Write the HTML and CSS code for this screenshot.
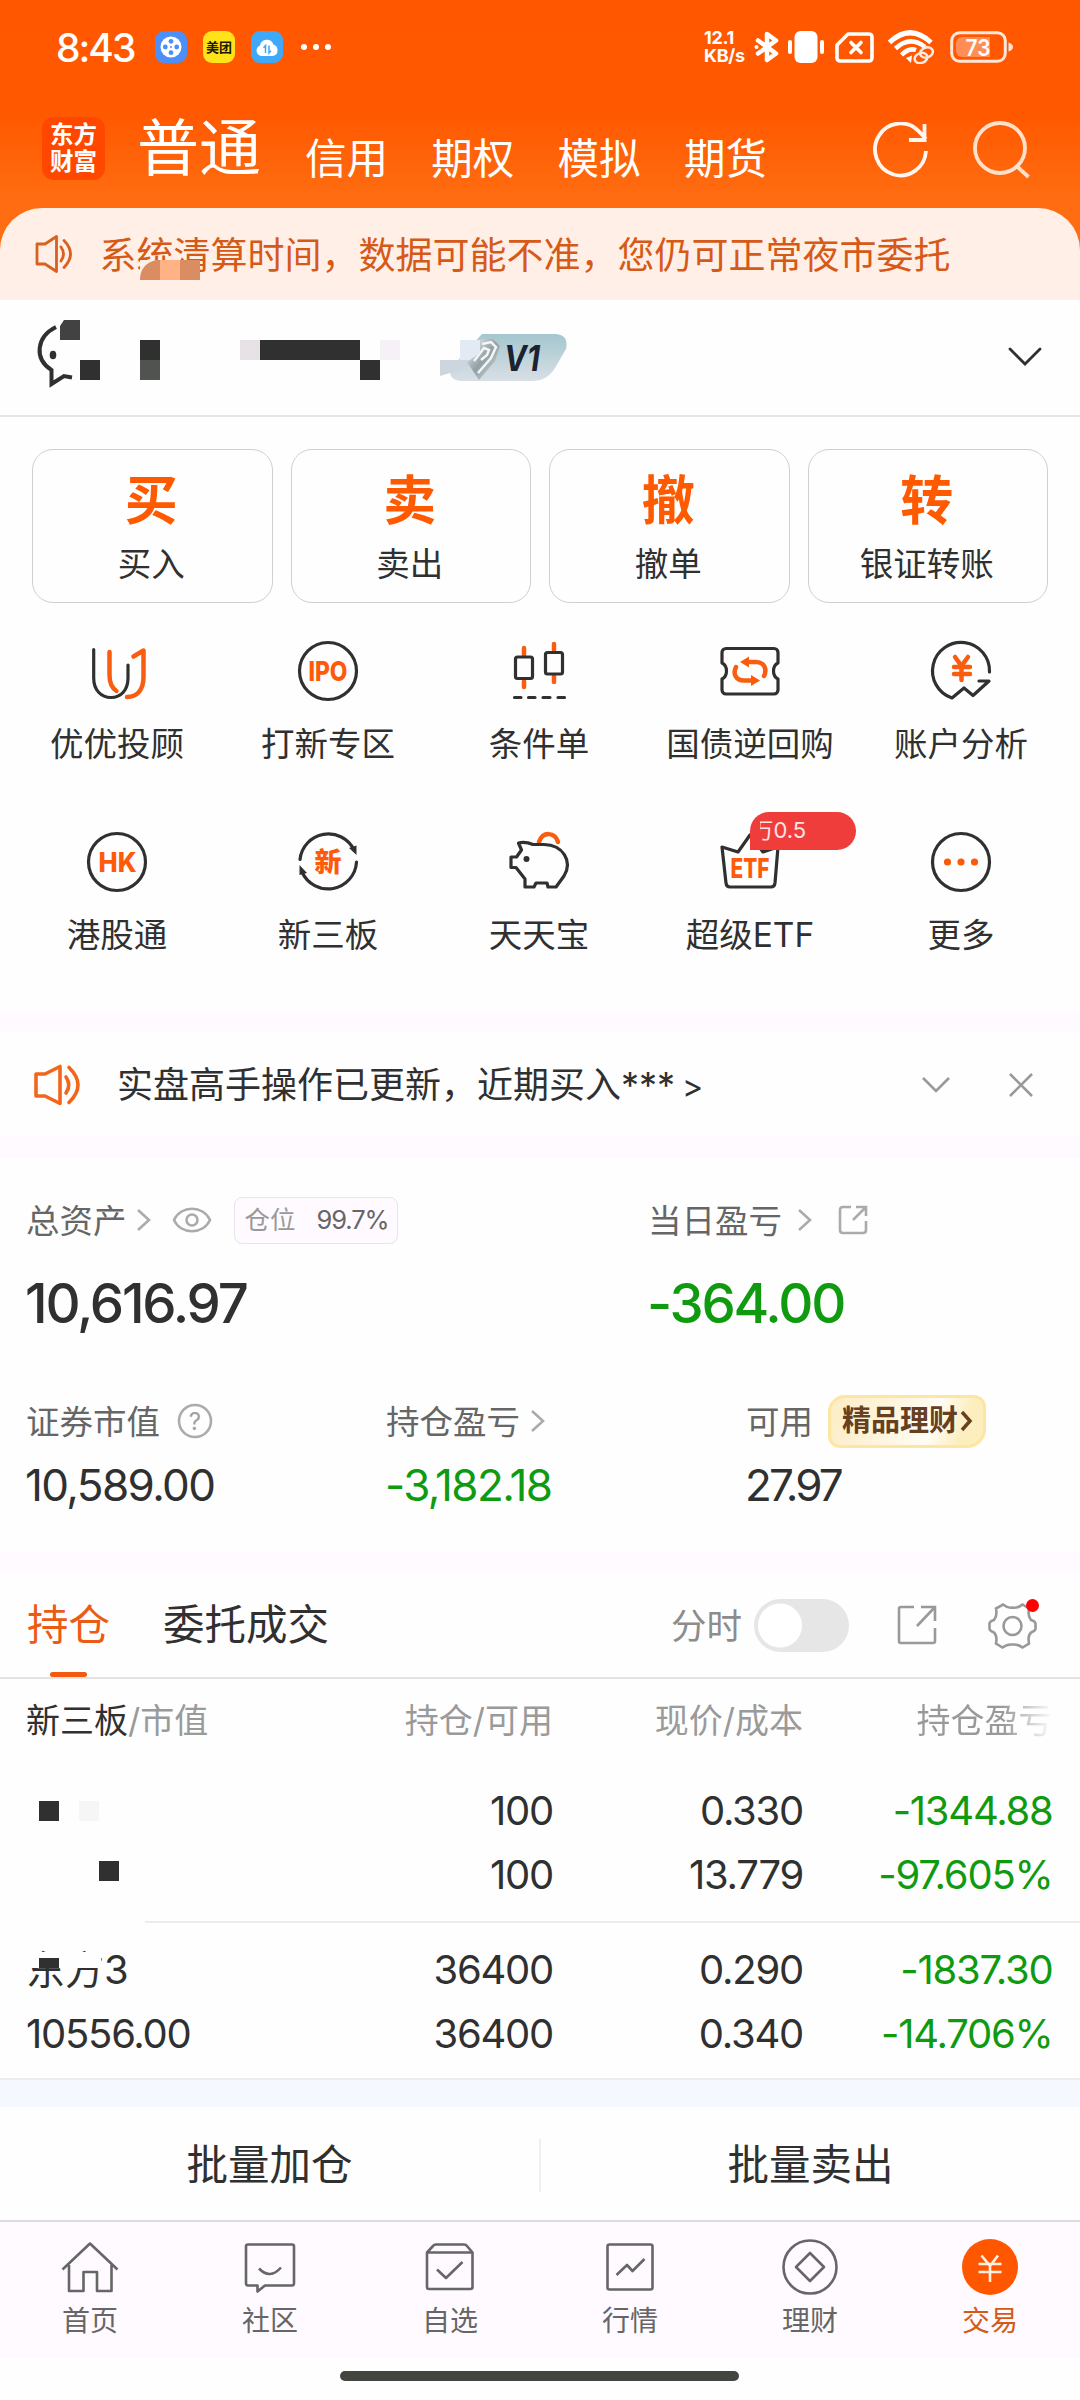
FILE: index.html
```html
<!DOCTYPE html>
<html lang="zh-CN">
<head>
<meta charset="utf-8">
<title>东方财富 - 交易</title>
<link rel="stylesheet" href="styles.css">
</head>
<body>
<div class="page">
  <header class="header">
    <div class="status">
      <span class="clock">8:43</span>
      <svg class="app" viewBox="0 0 32 32"><rect width="32" height="32" rx="9" fill="#4d8ff8"/><circle cx="16" cy="16" r="10.500" fill="#fff"/><g fill="#4d8ff8"><circle cx="16" cy="10.300" r="2.400"/><circle cx="16" cy="21.700" r="2.400"/><circle cx="10.300" cy="16" r="2.400"/><circle cx="21.700" cy="16" r="2.400"/><circle cx="16" cy="16" r="1"/></g></svg>
      <span class="app meituan">美团</span>
      <svg class="app" viewBox="0 0 32 32"><rect width="32" height="32" rx="9" fill="#3fa9f8"/><path d="M10 25a5.500 5.500 0 0 1-1-10.500 7 7 0 0 1 13.500-1A6 6 0 0 1 22 25Z" fill="#fff"/><path d="M14.500 22v-7.500l-2 2.200M18 14.500V22l2-2.200" fill="none" stroke="#3fa9f8" stroke-width="1.500"/></svg>
      <svg class="dots" viewBox="0 0 32 8"><g fill="#fff"><circle cx="4" cy="4" r="3"/><circle cx="16" cy="4" r="3"/><circle cx="28" cy="4" r="3"/></g></svg>
      <span class="speed"><span>12.1</span><span>KB/s</span></span>
      <svg class="bt" width="26" height="32" viewBox="0 0 26 32"><path d="M4 9.500L22 22.500L13 29V3L22 9.500L4 22.500" fill="none" stroke="#fff" stroke-width="4.500" stroke-linejoin="round" stroke-linecap="round"/><circle cx="2.500" cy="16" r="2" fill="#fff"/></svg>
      <svg class="vib" width="36" height="32" viewBox="0 0 36 32"><g fill="#fff"><rect x="6.500" y="0" width="23" height="32" rx="6"/><rect x="0" y="9" width="4" height="14" rx="2"/><rect x="32" y="9" width="4" height="14" rx="2"/></g></svg>
      <svg class="sim" width="39" height="32" viewBox="0 0 39 32"><path d="M13 3H34a3 3 0 0 1 3 3V27a3 3 0 0 1-3 3H5a3 3 0 0 1-3-3V14Z" fill="none" stroke="#fff" stroke-width="3.600" stroke-linejoin="round"/><path d="M16 11.500L26 21.500M26 11.500L16 21.500" stroke="#fff" stroke-width="3.600" stroke-linecap="round"/></svg>
      <svg class="wifi" width="46" height="34" viewBox="0 0 46 34"><g fill="none" stroke="#fff"><path d="M1.500 12.500Q22 -7 43 12.500" stroke-width="5"/><path d="M7.500 18.500Q22 5 37 17" stroke-width="4.500"/><path d="M13.500 25Q21 17.500 28 20" stroke-width="4.500"/></g><path d="M18 28L24 25.500L23 33Z" fill="#fff"/><g fill="none" stroke="#ffe9dc" stroke-width="2.400"><ellipse cx="33" cy="28" rx="6.500" ry="5" transform="rotate(-20 33 28)"/><ellipse cx="38.500" cy="22.500" rx="6.500" ry="5" transform="rotate(-20 38.500 22.500)"/></g></svg>
      <svg class="batt" width="64" height="32" viewBox="0 0 64 32"><rect x="1.700" y="1.700" width="53.600" height="28.600" rx="8" fill="none" stroke="#ffe6d8" stroke-width="3"/><path d="M12 6H40V26H12a6 6 0 0 1-6-6V12a6 6 0 0 1 6-6Z" fill="#ff8d55"/><path d="M58.500 11.500Q63 13 63 16T58.500 20.500Z" fill="#ffe6d8"/><text x="28" y="24.500" font-size="23" font-weight="600" fill="#fff" text-anchor="middle" textLength="25" lengthAdjust="spacingAndGlyphs">73</text></svg>
    </div>
    <nav class="topnav">
      <span class="logo">东方<br>财富</span>
      <span class="top-active">普通</span>
      <span class="top-item">信用</span><span class="top-item">期权</span><span class="top-item">模拟</span><span class="top-item">期货</span>
      <svg class="refresh" width="56" height="56" viewBox="0 0 56 56"><path d="M53 29A25.500 26 0 1 1 46 9.500L53 17M51.500 2V18H36" fill="none" stroke="#fff8f2" stroke-width="3.800"/></svg>
      <svg width="58" height="58" viewBox="0 0 58 58"><g fill="none" stroke="#ffe0cb" stroke-width="3.800"><circle cx="27" cy="27" r="25"/><path d="M43.500 45L55.500 56"/></g></svg>
    </nav>
  </header>

  <div class="notice">
    <svg class="notice-icon" width="38" height="40" viewBox="0 0 38 40"><g fill="none" stroke="#d9601f" stroke-width="2.800" stroke-linejoin="round" stroke-linecap="round"><path d="M2 10H10L21.500 2.500V37.500L10 30H2Z"/><path d="M26 13Q31 20 26 27M29 6.500Q42 20 29 33.500"/></g></svg>
    <span>系统清算时间，数据可能不准，您仍可正常夜市委托</span>
    <svg class="notice-mask" width="60" height="20" viewBox="0 0 60 20"><path d="M0 20Q0 4 16 0H20V20Z" fill="#da8c63"/><path d="M20 0H40V20H20Z" fill="#ffb285"/><path d="M40 0H60V20H40Z" fill="#da8c63"/></svg>
  </div>

  <section class="account">
    <svg class="avatar" width="62" height="66" viewBox="0 0 62 66"><path d="M18 14C-2 24-4 46 13.500 57V71L26 63L34 64.500" transform="translate(0 -7)" fill="none" stroke="#303030" stroke-width="4"/><ellipse cx="15" cy="35" rx="3.300" ry="4.300" fill="#303030"/><path d="M26 0H42V20H22V6Z" fill="#424242"/><path d="M42 40H62V60H42Z" fill="#303030"/></svg>
    <svg class="redacted" width="260" height="40" viewBox="0 0 260 40"><path d="M0 0H20V20H0Z" fill="#303030"/><path d="M0 20H20V40H0Z" fill="#50534f"/><path d="M100 0H120V20H100Z" fill="#e6e2e6"/><path d="M120 0H220V20H120ZM220 20H240V40H220Z" fill="#303030"/><path d="M240 0H260V20H240Z" fill="#f5f1f6"/></svg>
    <svg class="level" width="128" height="50" viewBox="0 0 128 50">
      <defs><linearGradient id="lv" x1="0" y1="0" x2="0" y2="1"><stop offset="0" stop-color="#a4c6ce"/><stop offset="1" stop-color="#d9dfe6"/></linearGradient><linearGradient id="gem" x1="0" y1="0" x2="1" y2="1"><stop offset="0" stop-color="#f7f9f9"/><stop offset=".5" stop-color="#929fa3"/><stop offset="1" stop-color="#dde6e8"/></linearGradient></defs>
      <path d="M42 1H116Q129 2 126 16L115 35Q107 48 92 48H20Q9 47 10 36Z" fill="url(#lv)"/>
      <path d="M41 6H53L60 13L55 28L39 47L27 29Z" fill="url(#gem)"/><path d="M42 11L51 9L56 14L51 25L38 40M34 28L44 15L49 17L47 22L41 27" fill="none" stroke="#f2f6f7" stroke-width="2.500"/>
      <path d="M20 7H40V20L30 27H20Z" fill="#e2ebf3"/><path d="M0 27H30L20 37L0 43Z" fill="#cdd5df"/>
      <text x="64" y="37.500" font-size="36" font-weight="700" font-style="italic" fill="#1b2230" textLength="36" lengthAdjust="spacingAndGlyphs">V1</text></svg>
    <svg class="account-more" width="34" height="20" viewBox="0 0 34 20"><path d="M2 2L17 17L32 2" fill="none" stroke="#303030" stroke-width="2.800" stroke-linecap="round"/></svg>
  </section>

  <section class="cards">
    <div class="card"><b>买</b><span>买入</span></div>
    <div class="card"><b>卖</b><span>卖出</span></div>
    <div class="card"><b>撤</b><span>撤单</span></div>
    <div class="card"><b>转</b><span>银证转账</span></div>
  </section>

  <section class="tools">
    <div class="tool"><svg viewBox="0 0 64 64"><path class="k" d="M8.700 10.500V39C8.700 51 16 58.500 26 58.500S43 51 43 39V26"/><path class="o" d="M24.500 13V36C24.500 45 27 49 31.500 52M48.500 17.500L58.500 11.500V38C58.500 51 52 58 42 58"/></svg><span>优优投顾</span></div>
    <div class="tool"><svg viewBox="0 0 64 64"><circle class="k" cx="32" cy="32" r="28.500"/><text x="12.500" y="42" font-size="27" textLength="39" lengthAdjust="spacingAndGlyphs">IPO</text></svg><span>打新专区</span></div>
    <div class="tool"><svg viewBox="0 0 64 64"><path class="o" d="M17 9V16M17 42V48M47 5V11M47 37V43"/><rect class="k" x="8.500" y="18" width="17" height="21.500" rx="2"/><rect class="k" x="38.500" y="13.500" width="17" height="21.500" rx="2"/><path class="k" d="M7.500 58.500H14M21.500 58.500H28M36 58.500H43M51 58.500H57.500"/></svg><span>条件单</span></div>
    <div class="tool"><svg viewBox="0 0 64 64"><path class="k" d="M8 9.500H56a4 4 0 0 1 4 4V24C54 27 54 37 60 40V51a4 4 0 0 1-4 4H8a4 4 0 0 1-4-4V40C10 37 10 27 4 24V13.500a4 4 0 0 1 4-4Z"/><path class="o" d="M30 23H38C46 23 49.500 30 46 37M18 28C14.500 35 18 41.500 26 41.500H33"/><path class="of" d="M22 23L31 17.500V28.500ZM42 41.500L33 36V47Z"/></svg><span>国债逆回购</span></div>
    <div class="tool"><svg viewBox="0 0 64 64"><path class="k" d="M60.500 33A28.500 28.500 0 1 0 23 59L35 49L44 56.500L60 42H50"/><path class="o" d="M26 18L32.500 27L39 18M32.500 27V41M25 28H41M25 35H41"/></svg><span>账户分析</span></div>
    <div class="tool"><svg viewBox="0 0 64 64"><circle class="k" cx="32" cy="32" r="28.500"/><text x="13.500" y="42" font-size="27" textLength="38" lengthAdjust="spacingAndGlyphs">HK</text></svg><span>港股通</span></div>
    <div class="tool"><svg viewBox="0 0 64 64"><path class="k" d="M4 29.500A28.500 28.500 0 0 1 58 20M60.500 32A28.500 28.500 0 0 1 6 42"/><path d="M53 18L60.500 15.500V25ZM3.500 45V35L11 43Z" fill="#303030"/><text x="32" y="42" font-size="27" text-anchor="middle">新</text></svg><span>新三板</span></div>
    <div class="tool"><svg viewBox="0 0 64 64"><path class="o" d="M32 12C36 1 48 2 51 12"/><path class="k" d="M26 14.500C20 12 15 12 11.500 13L14.500 20L9.500 27H4V37.500H9L18 49V57H27L29 53H40L41 57H49L57 46C66 31 56 15 37 14.500Z"/><circle cx="19.500" cy="29" r="3" fill="#303030"/></svg><span>天天宝</span></div>
    <div class="tool"><svg viewBox="0 0 64 64"><path class="k" d="M4 17L20 22L32 5L45 22L60 17L57 53Q56.500 57 53 57H12Q8.500 57 8 53Z"/><text x="12.500" y="47.500" font-size="27" textLength="39" lengthAdjust="spacingAndGlyphs">ETF</text></svg><i class="fee"><em>万</em>0.5</i><span>超级ETF</span></div>
    <div class="tool"><svg viewBox="0 0 64 64"><circle class="k" cx="32" cy="32" r="28.500"/><g class="of"><circle cx="18.500" cy="32" r="3.600"/><circle cx="32" cy="32" r="3.600"/><circle cx="45.500" cy="32" r="3.600"/></g></svg><span>更多</span></div>
  </section>

  <section class="news">
    <svg width="48" height="42" viewBox="0 0 48 42"><g fill="none" stroke="#f2661c" stroke-width="3.600" stroke-linejoin="round" stroke-linecap="round"><path d="M3 10H12L27 2.500V39.500L12 32H3Z"/><path d="M33 13Q38.500 21 33 29M36 3.500Q54 21 36 38.500"/></g></svg>
    <span class="news-text">实盘高手操作已更新，近期买入***<span class="gt">&gt;</span></span>
    <svg width="30" height="18" viewBox="0 0 30 18"><path d="M2 2L15 15L28 2" class="g"/></svg>
    <svg class="close" width="26" height="26" viewBox="0 0 26 26"><path d="M2 2L24 24M24 2L2 24" class="g"/></svg>
  </section>

  <section class="assets">
    <div class="big-row">
      <div class="cell">
        <div class="label"><span>总资产</span><svg class="chev" width="16" height="24" viewBox="0 0 16 24"><path d="M2 2L13 12L2 22" class="gl"/></svg>
          <svg class="eye" width="40" height="28" viewBox="0 0 40 28"><path d="M2 14C9 -1 31 -1 38 14C31 29 9 29 2 14Z" class="gl"/><circle cx="20" cy="14" r="5.500" class="gl"/></svg>
          <span class="ratio">仓位<b>99.7%</b></span></div>
        <div class="big">10,616.97</div>
      </div>
      <div class="cell">
        <div class="label"><span>当日盈亏</span><svg class="chev wide" width="16" height="24" viewBox="0 0 16 24"><path d="M2 2L13 12L2 22" class="gl"/></svg>
          <svg class="share" width="30" height="30" viewBox="0 0 30 30"><path d="M13 2H5Q2 2 2 5V25Q2 28 5 28H25Q28 28 28 25V16M18 2H28V11M28 2L15 15" class="gl"/></svg></div>
        <div class="big green">-364.00</div>
      </div>
    </div>
    <div class="small-row">
      <div class="cell"><div class="label"><span>证券市值</span><svg class="help" width="36" height="36" viewBox="0 0 36 36"><circle cx="18" cy="18" r="16" class="gl"/><text x="18" y="26.500" font-size="24" fill="#a0a0a0" text-anchor="middle">?</text></svg></div><div class="val">10,589.00</div></div>
      <div class="cell"><div class="label"><span>持仓盈亏</span><svg class="chev near" width="16" height="24" viewBox="0 0 16 24"><path d="M2 2L13 12L2 22" class="gl"/></svg></div><div class="val green">-3,182.18</div></div>
      <div class="cell"><div class="label"><span>可用</span><span class="wealth">精品理财<svg width="13" height="24" viewBox="0 0 13 24"><path d="M2 3L10 12L2 21" fill="none" stroke="#66401f" stroke-width="3.500"/></svg></span></div><div class="val short">27.97</div></div>
    </div>
  </section>

  <section class="tabs">
    <span class="tab active">持仓</span><span class="tab second-tab">委托成交</span>
    <span class="minute">分时</span><span class="switch"></span>
    <svg class="export" width="40" height="40" viewBox="0 0 40 40"><path d="M17 2H4Q2 2 2 4V36Q2 38 4 38H36Q38 38 38 36V23M24 2H38V16M38 2L20 21" class="g"/></svg>
    <svg class="gear" width="52" height="54" viewBox="0 0 52 54"><path d="M16 6.500Q21 10.500 25.500 9.500Q31 10.500 35.500 6.500L42 10.500Q40.500 18 44 22Q48 23 48.500 25.500V31Q48 33 44 34.500Q40.500 38 42 45.500L35.500 49.500Q31 46 25.500 46.500Q20 46 15.500 49.500L9 45.500Q10.500 38 7 34.500Q3 33 2.500 31V25.500Q3 23 7 22Q10.500 18 9 10.500Z" class="g"/><circle cx="25.500" cy="28" r="9" class="g"/><circle cx="45.500" cy="7.500" r="6.500" fill="#f00"/></svg>
  </section>

  <section class="table">
    <div class="tr th"><span class="name"><b>新三板</b>/市值</span><span>持仓/可用</span><span>现价/成本</span><span class="fade">持仓盈亏</span></div>
    <div class="holding">
      <div class="name"><svg width="100" height="128" viewBox="0 0 100 128"><path d="M13 22H33V42H13ZM73 82H93V102H73Z" fill="#303030"/><path d="M53 22H73V42H53Z" fill="#f6f6f6"/></svg></div>
      <div>100<br>100</div><div>0.330<br>13.779</div><div class="green">-1344.88<br>-97.605%</div>
    </div>
    <div class="line"></div>
    <div class="holding second">
      <div class="name"><span class="stock">东方<span class="num">3</span><svg width="80" height="20" viewBox="0 0 80 20"><path d="M0 0H75V16H0Z" fill="#fefefe"/><path d="M13 6H33V16H13Z" fill="#303030"/></svg></span><br>10556.00</div>
      <div>36400<br>36400</div><div>0.290<br>0.340</div><div class="green">-1837.30<br>-14.706%</div>
    </div>
  </section>

  <div class="blue"></div>
  <section class="batch"><span>批量加仓</span><span>批量卖出</span></section>

  <nav class="bottom">
    <div class="nav"><svg viewBox="0 0 60 60"><path d="M2.500 32.500L30 6.500L57.500 32.500M9 28V54H23.500V35H37V54H51.500V28"/></svg>首页</div>
    <div class="nav"><svg viewBox="0 0 60 60"><path d="M8 7.500H52Q54 7.500 54 9.500V46Q54 48.500 52 48.500H25L17.500 54.500V48.500H8Q6 48.500 6 46V9.500Q6 7.500 8 7.500ZM19 31.500Q30 43 41 30.500"/></svg>社区</div>
    <div class="nav"><svg viewBox="0 0 60 60"><path d="M7 15.500H52.500M7 15.500L13 9Q14 7.500 16 7.500H44Q46 7.500 47 9L52.500 15.500V50Q52.500 52 50.500 52H9Q7 52 7 50ZM17 32.500L26 41L42.500 25"/></svg>自选</div>
    <div class="nav"><svg viewBox="0 0 60 60"><rect x="7.500" y="7.500" width="45" height="45" rx="2"/><path d="M16.500 38L27 28L32.500 34L44.500 22"/></svg>行情</div>
    <div class="nav"><svg viewBox="0 0 60 60"><circle cx="30" cy="30" r="26.500"/><path d="M30 16L44 30L30 44L16 30Z"/></svg>理财</div>
    <div class="nav on"><svg viewBox="0 0 60 60"><circle cx="30" cy="30" r="28" class="disc"/><path class="yen" d="M21.500 18.500L30 29L38 18.500M30 29V45M18.500 27H41.500M18.500 35H41.500"/></svg>交易</div>
  </nav>
  <div class="home"></div>
</div>
</body>
</html>
```
FILE: styles.css
```css
* { box-sizing: border-box; }
body { margin: 0; background: #fefefe; color: #303030; font-family: Inter, "Noto Sans CJK SC", sans-serif; }
.page { width: 1080px; height: 2400px; overflow: hidden; display: flex; flex-direction: column; }
.page > * { flex: none; }
svg { display: block; flex: none; }
i, em { font-style: normal; }
.g { fill: none; stroke: #999; stroke-width: 2.6; }
.gl { fill: none; stroke: #ababab; stroke-width: 2.6; }
.green { color: #109a10; }

/* header */
.header { height: 258px; margin-bottom: -50px; background: linear-gradient(#ff5700 0, #ff5900 115px, #ff6d12 200px, #ff6d12); color: #fff; }
.status { height: 94px; padding-left: 56px; display: flex; align-items: center; }
.clock { width: 99px; font-size: 39px; font-weight: 500; letter-spacing: -2px; }
.app { width: 32px; height: 32px; margin-right: 16px; flex: none; }
.meituan { border-radius: 9px; background: #ffe31a; color: #1a1a00; font-size: 13px; font-weight: 700; line-height: 32px; text-align: center; white-space: nowrap; }
.dots { width: 32px; height: 8px; margin-left: 1px; }
.speed { width: 43px; margin-left: 372px; font-size: 18px; line-height: 18px; font-weight: 700; letter-spacing: -.3px; white-space: nowrap; display: flex; flex-direction: column; }
.bt { margin-left: 7px; }
.vib { margin-left: 8px; }
.sim { margin-left: 11px; }
.wifi { margin-left: 14px; }
.batt { margin-left: 16px; }
.topnav { height: 114px; padding-left: 42px; display: flex; align-items: center; }
.logo { width: 63px; height: 63px; border-radius: 12px; background: #ff4700; font-size: 23.500px; line-height: 27px; font-weight: 700; text-align: center; padding-top: 4px; margin-bottom: 5px; }
.top-active { width: 124px; margin: 0 44px 4px 32px; font-size: 62px; line-height: 80px; white-space: nowrap; }
.top-item { width: 126.300px; font-size: 41.500px; line-height: 60px; margin-top: 15px; white-space: nowrap; }
.refresh { margin: 0 44px 0 63px; }
.topnav > svg { margin-bottom: 2px; }

.notice { position: relative; height: 92px; padding-left: 35px; border-radius: 42px 42px 0 0; background: #ffefe7; color: #d65a17; font-size: 37px; display: flex; align-items: center; }
.notice-icon { margin-right: 26.500px; }
.notice > span { margin-top: -3px; }
.notice-mask { position: absolute; left: 140px; top: 52px; background: #ffefe7; }

.account { height: 117px; padding-left: 38px; border-bottom: 2px solid #e6e6e6; display: flex; align-items: flex-start; }
.avatar { margin-top: 20px; overflow: visible; }
.redacted { margin: 40px 40px 0; }
.level { margin-top: 33px; }
.account-more { margin: 47px 0 0 440px; }

.cards { height: 187px; padding: 32px 32px 1px; display: grid; grid-template-columns: repeat(4, 1fr); gap: 18px; }
.card { border: 1.500px solid #d0d0d0; border-radius: 21px; display: flex; flex-direction: column; align-items: center; padding-right: 2px; }
.card b { color: #ff5a00; font-size: 53px; line-height: 60px; padding-top: 21px; }
.card span { font-size: 33.500px; line-height: 50px; padding-top: 8px; }

.tools { height: 407px; padding: 35px 13.500px 0 11.500px; display: grid; grid-template-columns: repeat(5, 1fr); grid-auto-rows: 130px; row-gap: 61px; }
.tool { position: relative; display: flex; flex-direction: column; align-items: center; font-size: 33.500px; line-height: 50px; }
.tool svg { width: 64px; height: 64px; margin-bottom: 16px; overflow: visible; }
.tool text { fill: #ff5a0a; font-weight: 800; }
.k { fill: none; stroke: #303030; stroke-width: 3.200; stroke-linecap: round; stroke-linejoin: round; }
.o { fill: none; stroke: #f95d10; stroke-width: 4.500; stroke-linecap: round; stroke-linejoin: round; }
.of { fill: #fa5b0b; }
.fee { position: absolute; left: 105px; top: -18px; width: 106px; height: 38px; padding-left: 10px; border-radius: 19px 19px 19px 0; background: #ef3d3c; color: #ffe3e3; font-size: 22px; line-height: 37px; display: flex; }
.fee em { width: 14px; display: flex; justify-content: flex-end; overflow: hidden; }

.news { height: 147px; padding-left: 33px; border: solid #fefaff; border-width: 21px 0; display: flex; align-items: center; }
.news-text { width: 804px; margin: -6px 0 0 36px; font-size: 36px; white-space: nowrap; }
.news-text .gt { margin-left: 7px; font-size: 32px; }
.close { margin: 0 0 0 57px; }

/* asset figures */
.assets { height: 415px; padding-left: 27px; border-bottom: 21px solid #fefaff; }
.big-row { height: 214px; padding-top: 36px; display: grid; grid-template-columns: 622px 1fr; }
.small-row { display: grid; grid-template-columns: 360px 360px 1fr; padding-top: 23px; }
.label { height: 52px; display: flex; align-items: center; color: #666; font-size: 33.500px; white-space: nowrap; }
.label > span:first-child { margin: -3px 1px 0 -1px; }
.chev { margin-left: 8px; }
.chev.wide { margin-left: 14px; }
.chev.near { margin-left: 9px; }
.eye { margin-left: 20px; }
.share { margin-left: 25px; }
.help { margin-left: 16px; }
.ratio { width: 164px; height: 47px; margin-left: 22px; padding-left: 10px; border: 1.500px solid #e7e4ea; border-radius: 8px; background: #fefaff; color: #999; font-size: 25.500px; line-height: 44px; }
.ratio b { font-weight: 400; color: #666; margin-left: 21px; letter-spacing: -1.100px; }
.big { margin: 22px 0 0 -2px; font-size: 54.500px; line-height: 70px; font-weight: 450; letter-spacing: -2.200px; }
.val { margin: 12px 0 0 -2px; font-size: 44px; line-height: 52px; letter-spacing: -1.600px; }
.short { letter-spacing: -2.800px; }
.wealth { width: 158px; height: 53px; margin-left: 14px; padding-left: 11px; display: flex; align-items: center; border: 3px solid #fde6a2; border-radius: 17px 12px 19px 12px; background: linear-gradient(110deg, #fdedc5, #fff5df 40%, #fffdf6 65%, #fdeebf 85%); color: #66401f; font-size: 29px; font-weight: 700; line-height: 44px; padding-bottom: 1px; }
.wealth svg { margin-left: 2px; }

.tabs { height: 106px; padding-left: 27px; border-bottom: 2px solid #e3e3e3; display: flex; align-items: center; font-size: 41.500px; }
.tab { position: relative; width: 83px; margin-right: 53px; line-height: 104px; white-space: nowrap; }
.second-tab { width: 166px; }
.active { color: #ec5b14; }
.active::after { content: ""; position: absolute; left: 23px; bottom: 0; width: 37px; height: 5px; border-radius: 3px; background: #f25a10; }
.minute { width: 72px; margin: -4px 0 0 289px; color: #8c8c8c; font-size: 35.500px; white-space: nowrap; margin-left: 288px; }
.tabs .minute { margin-left: 289px; margin-right: -1px; }
.tabs .second-tab { margin-right: -8px; }
.tabs .minute { padding-left: 0; margin-left: 350px; }
.switch { width: 95px; height: 53px; margin-left: 12px; border-radius: 27px; background: radial-gradient(circle at 26px 26.500px, #fff 21.500px, #e6e6e6 22.500px); }
.export { margin-left: 48px; }
.gear { margin: 0 0 0 50px; }

.table { height: 401px; border-bottom: 2px solid #ededed; }
.tr, .holding { display: grid; grid-template-columns: 326px 200px 250px 249.500px; padding-left: 27px; text-align: right; }
.tr { height: 84px; line-height: 84px; color: #9a9a9a; font-size: 34px; }
.name { text-align: left; margin-left: -1px; }
.th b { font-weight: 400; color: #303030; }
.fade { background: linear-gradient(90deg, #999 80%, #fefefe 100%); background-clip: text; color: transparent; }
.holding { height: 158px; padding-top: 16px; font-size: 40px; line-height: 64px; letter-spacing: -1.250px; }
.second { padding-top: 14.500px; }
.line { height: 2px; margin-left: 145px; background: #ececec; }
.stock { position: relative; font-size: 39px; letter-spacing: 0; }
.stock .num { font-size: 40px; }
.stock svg { position: absolute; left: 0; top: 6px; }

.blue { height: 27px; background: #f5f9ff; }
.batch { height: 113px; padding-top: 3px; display: grid; grid-template-columns: 539px 1fr; align-items: center; text-align: center; font-size: 41.500px; }
.batch span { line-height: 53px; }
.batch span + span { border-left: 2px solid #f0f0f0; }

.bottom { height: 138px; padding-top: 15px; border-top: 2px solid #dedce0; background: #fefaff; display: grid; grid-template-columns: repeat(6, 1fr); }
.nav { display: flex; flex-direction: column; align-items: center; color: #666; font-size: 28px; line-height: 40px; }
.nav svg { width: 60px; height: 60px; margin-bottom: 4px; fill: none; stroke: #666; stroke-width: 2.600; stroke-linejoin: round; }
.on { color: #d65a17; }
.nav.on .disc { fill: #ff5700; stroke: none; }
.nav.on .yen { stroke: #fff0e0; }
.home { width: 399px; height: 10px; margin: 13px 0 0 340px; border-radius: 5px; background: #434541; }
```
